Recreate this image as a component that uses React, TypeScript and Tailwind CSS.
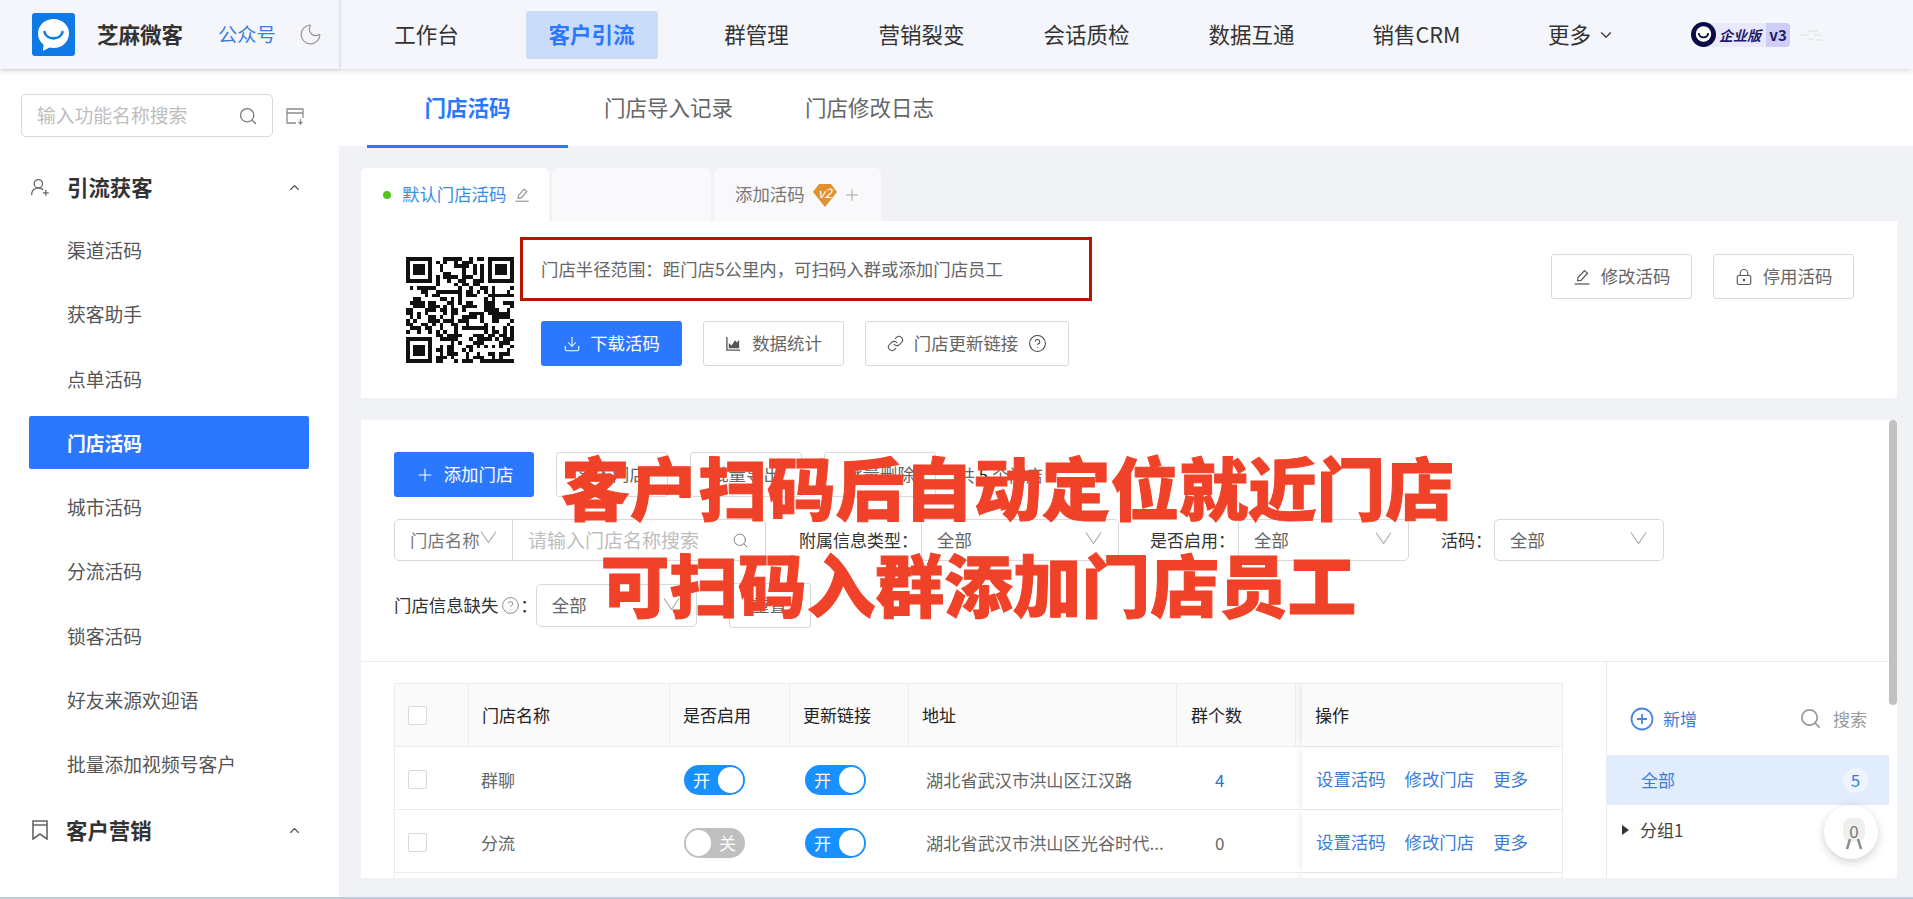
import { CircleHelp, ChevronDown, ChevronUp, Download, Link, LockKeyhole, Moon, Plus, Search, UserRoundPlus } from "lucide-react";

const CJK = "font-['Noto_Sans_CJK_SC','Noto_Sans',sans-serif]";

const navItems = ["工作台", "客户引流", "群管理", "营销裂变", "会话质检", "数据互通", "销售CRM"];
const menuItems = ["渠道活码", "获客助手", "点单活码", "门店活码", "城市活码", "分流活码", "锁客活码", "好友来源欢迎语", "批量添加视频号客户"];

const rows = [
  { name: "群聊", enabled: true, address: "湖北省武汉市洪山区江汉路", count: "4" },
  { name: "分流", enabled: false, address: "湖北省武汉市洪山区光谷时代...", count: "0" },
  { name: "", enabled: true, address: "", count: "" },
];

// qr modules: finder squares plus a seeded scatter
const QR_SIZE = 29;
function qrCells() {
  const cells: [number, number][] = [];
  let seed = 20240;
  for (let y = 0; y < QR_SIZE; y++) {
    for (let x = 0; x < QR_SIZE; x++) {
      seed = (seed * 1103515245 + 12345) & 0x7fffffff;
      const inFinder = (x < 8 && y < 8) || (x > 20 && y < 8) || (x < 8 && y > 20);
      if (!inFinder && (seed >> 12) % 100 < 52) cells.push([x, y]);
    }
  }
  return cells;
}

function Finder({ x, y }: { x: number; y: number }) {
  return (
    <g>
      <path d={`M${x} ${y}h7v7h-7zM${x + 1} ${y + 1}v5h5v-5z`} fillRule="evenodd" fill="#111" />
      <rect x={x + 2} y={y + 2} width="3" height="3" fill="#111" />
    </g>
  );
}

function QrCode() {
  return (
    <svg viewBox="0 0 29 29" className="w-[108px] h-[106px] shrink-0" shapeRendering="crispEdges" preserveAspectRatio="none">
      <Finder x={0} y={0} />
      <Finder x={22} y={0} />
      <Finder x={0} y={22} />
      {qrCells().map(([x, y]) => (
        <rect key={`${x}-${y}`} x={x} y={y} width="1" height="1" fill="#111" />
      ))}
    </svg>
  );
}

function Logo() {
  return (
    <svg viewBox="0 0 43 43" className="w-[43px] h-[43px] shrink-0">
      <rect width="43" height="43" rx="3" fill="#0f7ae5" />
      <path d="M21.500 6C30.500 6 37 12.500 37 20.500C37 29 30 35 21.500 35C20 35 18.500 34.800 17.500 34.500L11 38L11.500 31.500C7.800 29 6 25 6 20.500C6 12.500 12.500 6 21.500 6Z" fill="#fff" />
      <path d="M12.500 19C14 27.500 29 27.500 30.500 19" fill="none" stroke="#0f7ae5" strokeWidth="2.600" strokeLinecap="round" />
    </svg>
  );
}

function PenLine({ className }: { className: string }) {
  return (
    <svg viewBox="0 0 18 18" className={className} fill="none" stroke="currentColor" strokeWidth="1.200">
      <path d="M4.500 12.500L5 9.500 11.500 2.500 14.500 5.200 8 12.300z" />
      <path d="M1.500 16h15" />
    </svg>
  );
}

function AreaIcon({ className }: { className: string }) {
  return (
    <svg viewBox="0 0 18 18" className={className}>
      <path d="M2 2v14h14" fill="none" stroke="currentColor" strokeWidth="1.400" />
      <path d="M4 14V8.500l3 2.500 3.500-5.500 2 2.500L15 5v9z" fill="currentColor" />
    </svg>
  );
}

function Caret({ className }: { className: string }) {
  return (
    <svg viewBox="0 0 17 14" className={`w-[17px] h-[14px] shrink-0 ${className}`} fill="none" stroke="#a8a8a8" strokeWidth="1.100">
      <path d="M1 1.500L8.500 12.500 16 1.500" />
    </svg>
  );
}

function Switch({ on }: { on: boolean }) {
  if (on) {
    return (
      <div className="w-[61px] h-[30px] rounded-full bg-[#1890ff] flex items-center justify-between pl-[9px] pr-[2px] text-[17px] leading-none text-white">
        <span>开</span>
        <span className="w-[25px] h-[26px] rounded-full bg-white" />
      </div>
    );
  }
  return (
    <div className="w-[61px] h-[30px] rounded-full bg-[#bfbfbf] flex items-center justify-between pl-[2px] pr-[9px] text-[17px] leading-none text-white">
      <span className="w-[25px] h-[26px] rounded-full bg-white" />
      <span>关</span>
    </div>
  );
}

function Outline({ className, children }: { className: string; children: React.ReactNode }) {
  return (
    <div className={`h-[45px] shrink-0 flex items-center justify-center gap-[10px] rounded-[3px] border border-[#d9d9d9] bg-white text-[17.400px] text-[#666] ${className}`}>
      {children}
    </div>
  );
}

function Select({ className, label }: { className: string; label: string }) {
  return (
    <div className={`h-full flex items-center justify-between pl-[15px] pr-[16px] rounded-[5px] border border-[#d9d9d9] bg-white text-[17.400px] text-[#666] ${className}`}>
      <span>{label}</span>
      <Caret className="-mt-[4px]" />
    </div>
  );
}

function Sidebar() {
  return (
    <aside className="w-[339px] shrink-0 bg-white pt-[25px] overflow-hidden">
      <div className="flex items-center pl-[21px]">
        <div className="w-[252px] h-[43px] rounded-[5px] border border-[#d9d9d9] flex items-center justify-between pl-[15px] pr-[14px]">
          <span className="text-[18.800px] text-[#bdbdbd]">输入功能名称搜索</span>
          <Search size={20} strokeWidth={1.500} className="text-[#777]" />
        </div>
        <svg viewBox="0 0 20 20" className="w-[20px] h-[20px] ml-[12px]" fill="none" stroke="#8a8a8a" strokeWidth="1.300">
          <path d="M11 17H2V3h16v9M2 7h16" />
          <path d="M15.500 13v5M13.500 16l2 2 2-2" />
        </svg>
      </div>
      <div className="mt-[18px] h-[64px] flex items-center pl-[30px] pr-[37px]">
        <UserRoundPlus size={20} strokeWidth={1.500} className="text-[#666]" />
        <span className="ml-[17px] text-[21.400px] font-bold text-[#333]">引流获客</span>
        <ChevronUp size={15} strokeWidth={2.200} className="ml-auto text-[#444]" />
      </div>
      <div className="-mt-[1px]">
        {menuItems.map((item) =>
          item === "门店活码" ? (
            <div key={item} className="h-[64.250px] flex items-center">
              <div className="ml-[29px] w-[280px] h-[53px] rounded-[2px] bg-[#2b78ff] flex items-center pl-[38px] text-[18.800px] font-bold text-white">{item}</div>
            </div>
          ) : (
            <div key={item} className="h-[64.250px] flex items-center pl-[67px] text-[18.800px] text-[#555]">{item}</div>
          )
        )}
      </div>
      <div className="h-[68px] flex items-center pl-[32px] pr-[37px]">
        <svg viewBox="0 0 16 20" className="w-[16px] h-[20px] text-[#666]" fill="none" stroke="currentColor" strokeWidth="1.600">
          <path d="M1 1h14v18l-7-5-7 5zM1 5h14" />
        </svg>
        <span className="ml-[18px] text-[21.400px] font-bold text-[#333]">客户营销</span>
        <ChevronUp size={15} strokeWidth={2.200} className="ml-auto text-[#444]" />
      </div>
    </aside>
  );
}

function StoreTable() {
  return (
    <div className="flex-1 min-w-0 pl-[33px] pt-[21px] overflow-hidden">
      <div className="w-[1169px] text-[17px]">
        <div className="grid grid-cols-[74px_201px_120px_119px_268px_120px_6px_261px] h-[64px] bg-[#fafafa] border-y border-[#ececec] text-[#222]">
          <div className="flex items-center pl-[13px] border-l border-[#ececec]"><span className="w-[19px] h-[19px] rounded-[2px] border border-[#d9d9d9] bg-white" /></div>
          <div className="flex items-center pl-[13px] border-l border-[#ececec]">门店名称</div>
          <div className="flex items-center pl-[13px] border-l border-[#ececec]">是否启用</div>
          <div className="flex items-center pl-[13px] border-l border-[#ececec]">更新链接</div>
          <div className="flex items-center pl-[13px] border-l border-[#ececec]">地址</div>
          <div className="flex items-center pl-[14px] border-x border-[#ececec]">群个数</div>
          <div />
          <div className="flex items-center pl-[13px] border-r border-[#ececec] shadow-[-4px_0_6px_-2px_rgba(0,0,0,0.08)]">操作</div>
        </div>
        {rows.map((row, i) => (
          <div key={i} className="grid grid-cols-[74px_201px_120px_119px_268px_120px_6px_261px] h-[63px] border-b border-[#ececec] text-[#666]">
            <div className="flex items-center pl-[13px] pt-[3px] border-l border-[#ececec]"><span className="w-[19px] h-[19px] rounded-[2px] border border-[#d9d9d9]" /></div>
            <div className="flex items-center pl-[13px] pt-[3px]">{row.name}</div>
            <div className="flex items-center pl-[15px] pt-[3px]">{row.name && <Switch on={row.enabled} />}</div>
            <div className="flex items-center pl-[16px] pt-[3px]">{row.name && <Switch on />}</div>
            <div className="flex items-center pl-[18px] pt-[3px] text-[17.200px] whitespace-nowrap">{row.address}</div>
            <div className={`flex items-center pl-[39px] pt-[3px] ${row.count === "4" ? "text-[#2f73d9]" : ""}`}>{row.count}</div>
            <div />
            {row.name ? (
              <div className="flex items-center pl-[14px] pt-[3px] gap-[19px] border-r border-[#ececec] text-[17.400px] text-[#3b7ddb] shadow-[-4px_0_6px_-2px_rgba(0,0,0,0.08)]">
                <span>设置活码</span>
                <span>修改门店</span>
                <span>更多</span>
              </div>
            ) : (
              <div className="border-r border-[#ececec] shadow-[-4px_0_6px_-2px_rgba(0,0,0,0.08)]" />
            )}
          </div>
        ))}
      </div>
    </div>
  );
}

function GroupPanel() {
  return (
    <div className="w-[283px] shrink-0 border-l border-[#ececec] text-[17px]">
      <div className="h-[93px] flex items-center justify-between pl-[23px] pr-[22px] pt-[20px]">
        <div className="flex items-center gap-[9px] text-[#3b7ddb]">
          <svg viewBox="0 0 24 24" className="w-[24px] h-[24px]" fill="none" stroke="#4a86e0" strokeWidth="1.800">
            <circle cx="12" cy="12" r="10.500" />
            <path d="M12 7v10M7 12h10" />
          </svg>
          <span>新增</span>
        </div>
        <div className="flex items-center gap-[11px] text-[#999]">
          <Search size={23} strokeWidth={1.800} className="text-[#9a9a9a]" />
          <span>搜索</span>
        </div>
      </div>
      <div className="h-[50px] bg-[#e1ecfd] flex items-center justify-between pl-[34px] pr-[21px] text-[#3b7ddb]">
        <span>全部</span>
        <span className="w-[25px] h-[25px] rounded-full bg-[#eef4fe] flex items-center justify-center">5</span>
      </div>
      <div className="h-[50px] flex items-center justify-between pl-[15px] pr-[22px] text-[#444]">
        <span className="flex items-center gap-[11px]">
          <span className="w-0 h-0 border-y-[5px] border-y-transparent border-l-[7px] border-l-[#333]" />
          分组1
        </span>
      </div>
    </div>
  );
}

export default function App() {
  return (
    <div className={`relative h-[899px] w-[1913px] overflow-hidden flex flex-col border-b-2 border-[#c3c9d6] bg-[#f0f2f6] ${CJK}`}>
      <header className="relative z-10 h-[69px] shrink-0 flex bg-[#f5f6fb] shadow-[0_2px_6px_rgba(0,0,0,0.14)]">
        <div className="w-[339px] shrink-0 flex items-center pl-[32px] shadow-[1px_0_3px_rgba(0,0,0,0.14)]">
          <Logo />
          <span className="ml-[22px] text-[21.500px] font-bold text-[#333]">芝麻微客</span>
          <span className="ml-[35px] text-[19.300px] text-[#3b7ddb]">公众号</span>
          <Moon size={25} strokeWidth={1.200} className="ml-[22px] text-[#999]" />
        </div>
        <nav className="flex items-center pl-[5px]">
          {navItems.map((item) => (
            <div key={item} className="w-[165px] flex justify-center">
              {item === "客户引流" ? (
                <span className="w-[132px] h-[48px] rounded-[3px] bg-[#cbdcfb] flex items-center justify-center text-[21.500px] font-bold text-[#2b78ff]">{item}</span>
              ) : (
                <span className="text-[21.500px] text-[#333]">{item}</span>
              )}
            </div>
          ))}
          <div className="w-[165px] flex items-center justify-center gap-[6px] text-[21.500px] text-[#333]">
            更多
            <ChevronDown size={18} strokeWidth={1.500} />
          </div>
        </nav>
        <div className="flex items-center ml-[27px]">
          <svg viewBox="0 0 26 26" className="relative z-10 w-[25px] h-[25px]">
            <circle cx="13" cy="13" r="13" fill="#0b0b45" />
            <circle cx="13" cy="12.500" r="8" fill="#fff" />
            <path d="M8 11.500c1 6 9 6 10 0" fill="none" stroke="#0b0b45" strokeWidth="2" />
          </svg>
          <div className="w-[86px] -ml-[12px] h-[24px] rounded-r-[4px] bg-[#e9e9fb] flex items-center pl-[15px] overflow-hidden">
            <span className="text-[14px] font-bold italic leading-none text-[#1d1d6b] whitespace-nowrap">企业版</span>
            <span className="ml-auto w-[24px] h-full bg-[#cdcdf8] flex items-center justify-center text-[15px] font-bold leading-none text-[#1d1d6b]">v3</span>
          </div>
          <svg viewBox="0 0 24 14" className="ml-[10px] w-[24px] h-[14px]" fill="none" stroke="#e6e7ec" strokeWidth="1.500">
            <path d="M0 7h9M8 3h10M14 7h8M7 11h6M15 12h8" />
          </svg>
        </div>
      </header>

      <div className="flex flex-1 min-h-0">
        <Sidebar />
        <main className="flex-1 min-w-0 flex flex-col">
          <div className="h-[77px] shrink-0 bg-white flex items-start pl-[28px]">
            {["门店活码", "门店导入记录", "门店修改日志"].map((tab, i) =>
              i === 0 ? (
                <div key={tab} className="w-[201px] h-[79px] flex items-center justify-center border-b-[3px] border-[#2b78ff] text-[21.500px] font-bold text-[#2b78ff]">{tab}</div>
              ) : (
                <div key={tab} className="w-[201px] h-[79px] flex items-center justify-center pb-[3px] text-[21.500px] text-[#666]">{tab}</div>
              )
            )}
          </div>

          <div className="flex-1 min-h-0 flex flex-col pl-[22px] pr-[16px] pb-[19px]">
            <div className="mt-[22px] h-[53px] shrink-0 flex gap-[3px]">
              <div className="w-[188px] rounded-t-[6px] bg-white flex items-center pl-[22px] text-[17.400px] text-[#3a8ee6]">
                <span className="w-[8px] h-[8px] rounded-full bg-[#52c41a] mr-[11px]" />
                默认门店活码
                <PenLine className="ml-[8px] w-[16px] h-[16px] text-[#888]" />
              </div>
              <div className="w-[159px] rounded-t-[6px] bg-[#f9f9fb]" />
              <div className="w-[167px] rounded-t-[6px] bg-[#f9f9fb] flex items-center pl-[21px] text-[17.400px] text-[#777]">
                添加活码
                <svg viewBox="0 0 24 24" className="ml-[8px] w-[24px] h-[24px]">
                  <path d="M6 1h12l6 8-12 15L0 9z" fill="#e0922e" />
                  <text x="12" y="15" textAnchor="middle" fontSize="13" fontStyle="italic" fill="#fff">v2</text>
                </svg>
                <Plus size={18} strokeWidth={1.200} className="ml-[6px] text-[#999]" />
              </div>
            </div>

            <section className="h-[177px] shrink-0 bg-white flex justify-between pl-[45px] pr-[43px] pt-[33px]">
              <div className="flex">
                <div className="pt-[3px]"><QrCode /></div>
                <div className="ml-[6px] mt-[-17px]">
                  <div className="w-[572px] h-[64px] border-[3px] border-[#b81400] flex items-center pl-[18px] text-[17.400px] text-[#666] whitespace-nowrap">
                    门店半径范围：距门店5公里内，可扫码入群或添加门店员工
                  </div>
                  <div className="mt-[20px] ml-[21px] flex gap-[21px]">
                    <div className="w-[141px] h-[45px] rounded-[3px] bg-[#2b78ff] flex items-center justify-center gap-[9px] text-[17.400px] text-white">
                      <Download size={18} strokeWidth={1.400} />
                      下载活码
                    </div>
                    <Outline className="w-[141px]">
                      <AreaIcon className="w-[17px] h-[17px] text-[#555]" />
                      数据统计
                    </Outline>
                    <Outline className="w-[204px]">
                      <Link size={17} strokeWidth={1.500} className="text-[#555]" />
                      门店更新链接
                      <CircleHelp size={19} strokeWidth={1.300} className="text-[#444]" />
                    </Outline>
                  </div>
                </div>
              </div>
              <div className="flex gap-[21px]">
                <Outline className="w-[141px]">
                  <PenLine className="w-[18px] h-[18px] text-[#555]" />
                  修改活码
                </Outline>
                <Outline className="w-[141px]">
                  <LockKeyhole size={18} strokeWidth={1.500} className="text-[#555]" />
                  停用活码
                </Outline>
              </div>
            </section>

            <section className="mt-[22px] flex-1 min-h-0 bg-white flex overflow-hidden">
              <div className="flex-1 min-w-0 flex flex-col">
                <div className="h-[242px] shrink-0 pl-[33px] pt-[32px] border-b border-[#ececec]">
                  <div className="flex items-center gap-[22px]">
                    <div className="w-[140px] h-[45px] rounded-[3px] bg-[#2b78ff] flex items-center justify-center gap-[9px] text-[17.400px] text-white">
                      <Plus size={20} strokeWidth={1.300} />
                      添加门店
                    </div>
                    <Outline className="w-[112px]">导入门店</Outline>
                    <Outline className="w-[112px]">批量导出</Outline>
                    <Outline className="w-[112px]">批量删除</Outline>
                    <span className="text-[17px] text-[#666]">共 <span className="text-[#222]">5</span> 个门店</span>
                  </div>
                  <div className="mt-[22px] h-[42px] flex items-center text-[17px] text-[#333]">
                    <div className="w-[372px] h-full flex rounded-[5px] border border-[#d9d9d9]">
                      <div className="w-[118px] flex items-center pl-[15px] border-r border-[#d9d9d9] text-[17.400px] text-[#777]">
                        门店名称
                        <Caret className="-mt-[6px]" />
                      </div>
                      <div className="flex-1 flex items-center justify-between pl-[15px] pr-[16px] text-[19px] text-[#bdbdbd]">
                        请输入门店名称搜索
                        <Search size={17} strokeWidth={1.300} className="text-[#777]" />
                      </div>
                    </div>
                    <span className="ml-[33px] w-[122px]">附属信息类型：</span>
                    <Select className="w-[198px]" label="全部" />
                    <span className="ml-[31px] w-[88px]">是否启用：</span>
                    <Select className="w-[171px]" label="全部" />
                    <span className="ml-[32px] w-[53px]">活码：</span>
                    <Select className="w-[170px]" label="全部" />
                  </div>
                  <div className="mt-[23px] h-[43px] flex items-center text-[17.400px] text-[#333]">
                    <span>门店信息缺失</span>
                    <CircleHelp size={19} strokeWidth={1.200} className="ml-[3px] text-[#888]" />
                    <span className="mr-[10px]">：</span>
                    <Select className="w-[161px] ml-[-12px]" label="全部" />
                    <Outline className="w-[82px] ml-[32px]">重置</Outline>
                  </div>
                </div>
                <div className="flex-1 min-h-0 flex">
                  <StoreTable />
                  <GroupPanel />
                </div>
              </div>
              <div className="w-[8px] shrink-0">
                <div className="h-[285px] rounded-full bg-[#c1c1c1]" />
              </div>
            </section>
          </div>
        </main>
      </div>

      {/* promo caption painted over the page */}
      <div className="absolute left-[561px] top-[437px] w-[893px] flex flex-col items-center text-[68.700px] leading-[97px] font-black text-[#f04228] [-webkit-text-stroke:1px_#f04228] whitespace-nowrap">
        <span>客户扫码后自动定位就近门店</span>
        <span className="mr-[58px]">可扫码入群添加门店员工</span>
      </div>

      {/* floating helper bubble */}
      <div className="absolute left-[1824px] top-[805px] w-[54px] h-[54px] rounded-full bg-white shadow-[0_3px_10px_rgba(0,0,0,0.18)] flex flex-col items-center pt-[13px] pl-[6px]">
        <span className="w-[22px] h-[24px] rounded-[8px] bg-[#efefef] flex items-center justify-center text-[17px] leading-none text-[#777]">0</span>
        <svg viewBox="0 0 20 12" className="w-[20px] h-[12px] -mt-[4px]" fill="none" stroke="#8a8a8a" strokeWidth="2.500">
          <path d="M6 1L3 11M14 1l3 10" />
        </svg>
      </div>
    </div>
  );
}
